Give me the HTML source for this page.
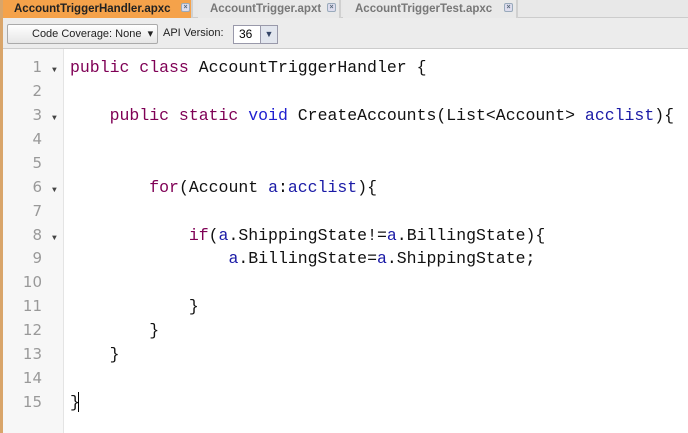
<!DOCTYPE html>
<html><head><meta charset="utf-8"><style>
*{margin:0;padding:0;box-sizing:border-box}
body{width:688px;height:433px;overflow:hidden;background:#fff;font-family:"Liberation Sans",sans-serif;position:relative}
.lb{position:absolute;left:0;top:0;width:3px;height:433px;background:#d9a56a}
.tabs{position:absolute;left:3px;top:0;width:685px;height:18px;background:#e8e8e8;border-bottom:1px solid #ccc}
.tab{position:absolute;top:0;height:18px;font-size:11.5px;font-weight:bold;line-height:18px;padding-left:12px;color:#777;background:#e9e9e9;border-right:2px solid #d0d0d0;white-space:nowrap}
.tab.a{background:#f5a24a;color:#222}
.x{position:absolute;top:3px;width:9px;height:9px;border:1px solid #9ab;border-radius:2px;background:#dde;font-size:7px;line-height:7px;text-align:center;color:#567}
.tb{position:absolute;left:3px;top:18px;width:685px;height:31px;background:#ececec;border-bottom:1px solid #ccc}
.btn{position:absolute;left:4px;top:6px;width:151px;height:20px;border:1px solid #aaa;border-radius:2px;background:linear-gradient(#fff,#e6e6e6);font-size:11px;line-height:18px;padding-left:24px;color:#222}
.lbl{position:absolute;left:160px;top:9px;font-size:11px;color:#222}
.sel{position:absolute;left:230px;top:7px;width:45px;height:19px;border:1px solid #99a;background:#fff;font-size:12px;line-height:17px;padding-left:5px}
.sel span{position:absolute;right:0;top:0;width:17px;height:17px;background:#e2e6ee;border-left:1px solid #99a;font-size:9px;line-height:17px;text-align:center;color:#346}
.gut{position:absolute;left:3px;top:49px;width:61px;height:384px;background:#f7f7f7;border-right:1px solid #e4e4e4}
.code{position:absolute;left:0;top:56px;font-family:"Liberation Mono",monospace;font-size:16.5px;line-height:23.93px}
.ln{position:absolute;left:0;width:42px;text-align:right;color:#999;font-family:"DejaVu Sans",sans-serif;font-size:15px}
.ar{position:absolute;left:52px;font-size:8px;color:#444}
.l{position:absolute;left:70px;white-space:pre;color:#111}
.k{color:#7f0055}.b{color:#2020d0}.v{color:#1a1aa6}
.cur{position:absolute;left:78px;top:392px;width:1px;height:20px;background:#000}
</style></head><body>
<div class="lb"></div>
<div class="tabs">
<div class="tab a" style="left:0;width:190px;padding-left:11px">AccountTriggerHandler.apxc<span class="x" style="left:178px">×</span></div>
<div class="tab" style="left:195px;width:143px">AccountTrigger.apxt<span class="x" style="left:129px">×</span></div>
<div class="tab" style="left:340px;width:175px">AccountTriggerTest.apxc<span class="x" style="left:161px">×</span></div>
</div>
<div class="tb">
<div class="btn">Code Coverage: None &nbsp;▾</div>
<div class="lbl">API Version:</div>
<div class="sel">36<span>▼</span></div>
</div>
<div class="gut"></div>
<div class="code">
<div class="ln" style="top:0">1</div><div class="ar" style="top:3px">▼</div>
<div class="ln" style="top:23.93px">2</div>
<div class="ln" style="top:47.86px">3</div><div class="ar" style="top:51px">▼</div>
<div class="ln" style="top:71.79px">4</div>
<div class="ln" style="top:95.72px">5</div>
<div class="ln" style="top:119.65px">6</div><div class="ar" style="top:123px">▼</div>
<div class="ln" style="top:143.58px">7</div>
<div class="ln" style="top:167.51px">8</div><div class="ar" style="top:171px">▼</div>
<div class="ln" style="top:191.44px">9</div>
<div class="ln" style="top:215.37px">10</div>
<div class="ln" style="top:239.3px">11</div>
<div class="ln" style="top:263.23px">12</div>
<div class="ln" style="top:287.16px">13</div>
<div class="ln" style="top:311.09px">14</div>
<div class="ln" style="top:335.02px">15</div>
<div class="l" style="top:0"><span class="k">public class</span> AccountTriggerHandler {</div>
<div class="l" style="top:47.86px">    <span class="k">public static</span> <span class="b">void</span> CreateAccounts(List&lt;Account&gt; <span class="v">acclist</span>){</div>
<div class="l" style="top:119.65px">        <span class="k">for</span>(Account <span class="v">a</span>:<span class="v">acclist</span>){</div>
<div class="l" style="top:167.51px">            <span class="k">if</span>(<span class="v">a</span>.ShippingState!=<span class="v">a</span>.BillingState){</div>
<div class="l" style="top:191.44px">                <span class="v">a</span>.BillingState=<span class="v">a</span>.ShippingState;</div>
<div class="l" style="top:239.3px">            }</div>
<div class="l" style="top:263.23px">        }</div>
<div class="l" style="top:287.16px">    }</div>
<div class="l" style="top:335.02px">}</div>
</div>
<div class="cur"></div>
</body></html>
